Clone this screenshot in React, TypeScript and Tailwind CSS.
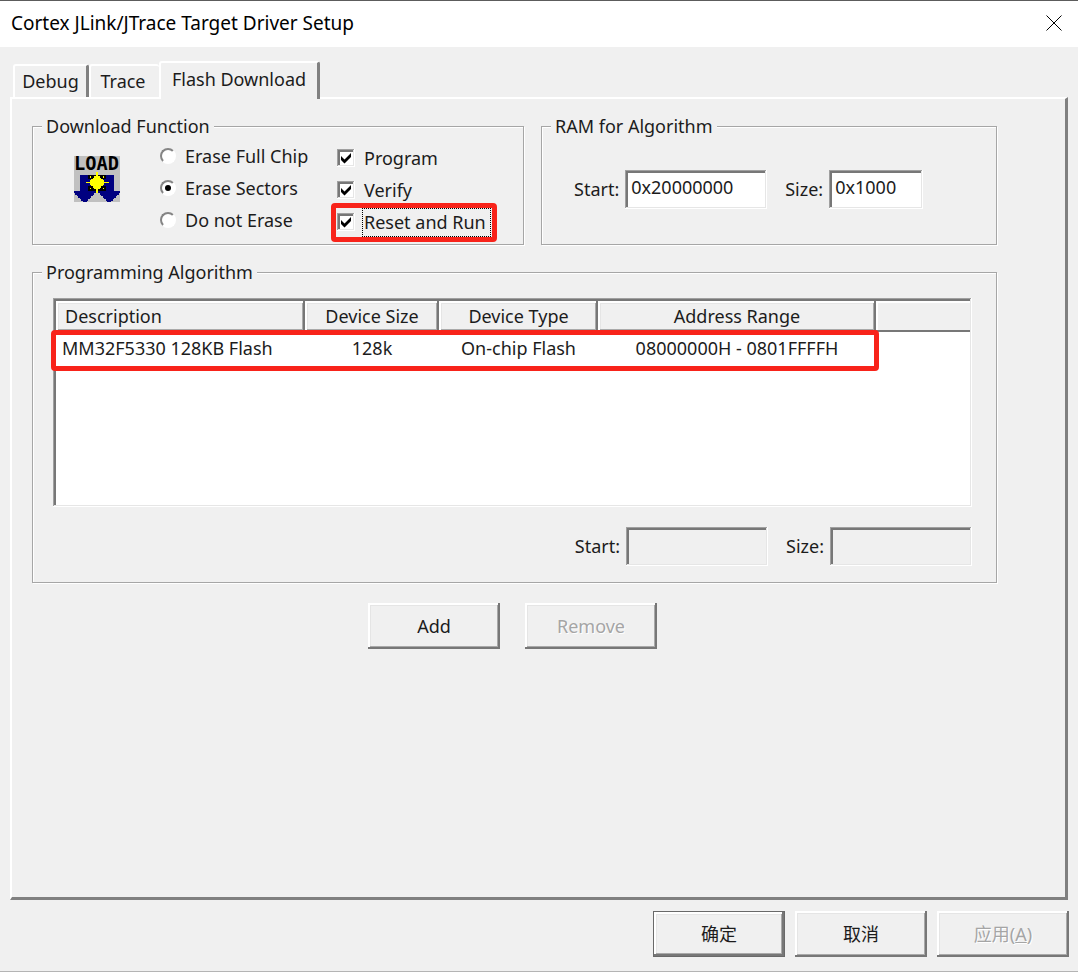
import { useState, type InputHTMLAttributes, type ReactNode } from "react";

const raised =
  "shadow-[inset_-2px_-2px_#777777,inset_2px_2px_#ffffff,inset_-3px_-3px_#a9a9a9,inset_3px_3px_#e5e5e5]";
const sunken =
  "shadow-[inset_-1px_-1px_#ffffff,inset_1px_1px_#a0a0a0,inset_-2px_-2px_#e6e6e6,inset_3px_3px_#777777]";

const tabs = [
  { name: "Debug", className: "h-[33px] w-[76px] border-r-[3px] border-r-[#808080]" },
  { name: "Trace", className: "h-[33px] w-[70px] border-r-0 pr-1" },
  {
    name: "Flash Download",
    className: "relative -mb-[2px] h-[38px] w-[161px] border-r-[3px] border-r-[#808080] pb-1",
  },
];

const eraseModes = ["Erase Full Chip", "Erase Sectors", "Do not Erase"];

const columns = [
  { name: "Description", width: "w-[249px]", align: "pl-[9px] text-left" },
  { name: "Device Size", width: "w-[134px]", align: "text-center" },
  { name: "Device Type", width: "w-[159px]", align: "text-center" },
  { name: "Address Range", width: "w-[278px]", align: "text-center" },
];

function LoadIcon() {
  return (
    <svg
      viewBox="0 0 32 32"
      className="size-[46px] overflow-visible"
      shapeRendering="crispEdges"
      aria-hidden="true"
    >
      <rect width="32" height="32" fill="#c0c0c0" />
      <path
        fill="#000080"
        d="M4 13h8v3h3v8h1v2h-2v1h-1v1h-1v1h-1v1h-1v1h-1v1h-3v-1h-1v-1h-1v-1h-1v-1h-1v-1h-1v-1h-1v-2h4z"
      />
      <path
        fill="#000080"
        d="M28 13h-8v3h-3v8h-1v2h2v1h1v1h1v1h1v1h1v1h1v1h3v-1h1v-1h1v-1h1v-1h1v-1h1v-1h1v-2h-4z"
      />
      <path
        fill="#000000"
        d="M10 13h3v3h-3zM13 13h2v2h-2zM17 13h2v2h-2zM19 13h3v3h-3zM10 21h3v3h-3zM13 22h2v2h-2zM17 22h2v2h-2zM19 21h3v3h-3z"
      />
      <path
        fill="#ffff00"
        d="M15 11h2v3h1v1h1v1h1v1h1v1h3v1h-3v1h-1v1h-1v1h-1v1h-1v3h-2v-3h-1v-1h-1v-1h-1v-1h-1v-1h-3v-1h3v-1h1v-1h1v-1h1v-1h1zM11 14h1v1h-1zM20 14h1v1h-1zM11 22h1v1h-1zM20 22h1v1h-1z"
      />
      <text
        x="0"
        y="10"
        fontSize="13"
        fontWeight="bold"
        fontFamily="DejaVu Sans Mono, monospace"
        fill="#000000"
      >
        LOAD
      </text>
    </svg>
  );
}

function Group({
  title,
  className,
  children,
}: {
  title: string;
  className: string;
  children: ReactNode;
}) {
  return (
    <fieldset
      className={`min-w-0 border border-[#a6a6a6] shadow-[1px_1px_#ffffff,inset_1px_1px_#ffffff] ${className}`}
    >
      <legend className="ml-[9px] h-[26px] bg-[#f0f0f0] px-1 leading-[26px]">{title}</legend>
      {children}
    </fieldset>
  );
}

function CheckBox({ label, focused }: { label: string; focused?: boolean }) {
  const [checked, setChecked] = useState(true);
  return (
    <label className="flex h-8 items-center gap-[8px]">
      <span className="grid">
        <input
          type="checkbox"
          checked={checked}
          onChange={() => setChecked(!checked)}
          className={`col-start-1 row-start-1 size-[18px] appearance-none bg-white ${sunken}`}
        />
        {checked && (
          <svg
            viewBox="0 0 18 18"
            className="pointer-events-none col-start-1 row-start-1 size-[18px]"
            aria-hidden="true"
          >
            <path d="M4 7l3.500 3.500L14 4v4l-6.500 6.500L4 11z" fill="#000000" />
          </svg>
        )}
      </span>
      <span
        className={
          focused ? "pr-1 pl-px leading-[27px] outline-1 outline-dotted outline-black" : "px-px"
        }
      >
        {label}
      </span>
    </label>
  );
}

function Field({
  id,
  label,
  className,
  ...rest
}: { id: string; label: string } & InputHTMLAttributes<HTMLInputElement>) {
  return (
    <div className="flex items-center gap-[6px]">
      <label htmlFor={id}>{label}</label>
      <input
        id={id}
        type="text"
        className={`h-[39px] bg-white pb-[5px] pl-[6px] outline-none disabled:bg-[#f0f0f0] ${sunken} ${className}`}
        {...rest}
      />
    </div>
  );
}

export default function App() {
  const [erase, setErase] = useState("Erase Sectors");

  return (
    <div className="flex min-h-screen flex-col border-t border-b border-t-[#5c5c5c] border-b-[#b4b4b4] bg-[#f0f0f0] font-['Noto_Sans','Noto_Sans_CJK_SC',sans-serif] text-[18px] text-[#1c1c1c]">
      <header className="flex h-[46px] items-center justify-between bg-white pr-4 pb-[2px] pl-[11px] text-black">
        <h1 className="text-[19px]">Cortex JLink/JTrace Target Driver Setup</h1>
        <button type="button" aria-label="Close">
          <svg viewBox="0 0 16 16" className="size-4" aria-hidden="true">
            <path d="M.5.5l15 15M15.500.5l-15 15" stroke="#000000" strokeWidth="1" />
          </svg>
        </button>
      </header>

      <div role="tablist" className="flex h-[50px] items-end pl-[13px]">
        {tabs.map((tab) => (
          <button
            key={tab.name}
            type="button"
            role="tab"
            aria-selected={tab.name === "Flash Download"}
            className={`rounded-t-[3px] border-t-2 border-l-2 border-t-white border-l-white bg-[#f0f0f0] whitespace-nowrap ${tab.className}`}
          >
            {tab.name}
          </button>
        ))}
      </div>

      <main className="mr-[10px] ml-[10px] flex-1 border-t-2 border-r-[3px] border-b-[3px] border-l-2 border-t-white border-r-[#808080] border-b-[#808080] border-l-white pt-[14px] pr-[68px] pl-[20px]">
        <div className="flex gap-[17px]">
          <Group title="Download Function" className="h-[132px] w-[492px]">
            <div className="flex">
              <div className="w-[127px] pt-[17px] pl-[41px]">
                <LoadIcon />
              </div>
              <div className="w-[177px] pt-px">
                {eraseModes.map((mode) => (
                  <label key={mode} className="flex h-8 items-center gap-[9px]">
                    <input
                      type="radio"
                      name="erase"
                      checked={erase === mode}
                      onChange={() => setErase(mode)}
                      className="grid size-4 shrink-0 appearance-none place-items-center rounded-full border-2 border-t-[#858585] border-r-white border-b-white border-l-[#858585] bg-white checked:before:size-[6px] checked:before:rounded-full checked:before:bg-black"
                    />
                    {mode}
                  </label>
                ))}
              </div>
              <div className="pt-[3px]">
                <CheckBox label="Program" />
                <CheckBox label="Verify" />
                <div className="relative">
                  <CheckBox label="Reset and Run" focused />
                  <div className="pointer-events-none absolute -top-[3px] -right-[7px] -bottom-[4px] -left-[6px] rounded-[4px] border-[5px] border-[#f8231a]" />
                </div>
              </div>
            </div>
          </Group>

          <Group title="RAM for Algorithm" className="h-[132px] flex-1">
            <div className="flex gap-[18px] pt-[31px] pl-[32px]">
              <Field id="ram-start" label="Start:" defaultValue="0x20000000" className="w-[142px]" />
              <Field id="ram-size" label="Size:" defaultValue="0x1000" className="w-[94px]" />
            </div>
          </Group>
        </div>

        <Group title="Programming Algorithm" className="mt-[14px] h-[324px]">
          <div className="relative mt-[13px] mr-[24px] ml-[20px]">
            <div className={`h-[209px] bg-white pt-[3px] pr-[2px] pl-[3px] ${sunken}`}>
              <table className="w-full table-fixed border-collapse">
                <thead>
                  <tr className="h-[31px] bg-[#f0f0f0]">
                    {columns.map((column) => (
                      <th
                        key={column.name}
                        className={`p-0 font-normal ${raised} ${column.width} ${column.align}`}
                      >
                        {column.name}
                      </th>
                    ))}
                    <td className="shadow-[inset_0_-2px_#777777,inset_2px_2px_#ffffff]" />
                  </tr>
                </thead>
                <tbody>
                  <tr className="h-[32px] text-center">
                    <td className="pl-[6px] text-left whitespace-nowrap">MM32F5330 128KB Flash</td>
                    <td>128k</td>
                    <td>On-chip Flash</td>
                    <td>08000000H - 0801FFFFH</td>
                    <td />
                  </tr>
                </tbody>
              </table>
            </div>
            <div className="pointer-events-none absolute top-[32px] -left-[2px] h-[41px] w-[828px] rounded-[4px] border-[5px] border-[#f8231a]" />
          </div>
          <div className="mt-[20px] mr-[24px] flex justify-end gap-[18px]">
            <Field id="flash-start" label="Start:" disabled className="w-[142px]" />
            <Field id="flash-size" label="Size:" disabled className="w-[142px]" />
          </div>
        </Group>

        <div className="mt-[20px] flex gap-[25px] pl-[336px]">
          <button type="button" className={`h-[46px] w-[132px] ${raised}`}>
            Add
          </button>
          <button
            type="button"
            disabled
            className={`h-[46px] w-[132px] text-[#a5a5a5] [text-shadow:1px_1px_#ffffff] ${raised}`}
          >
            Remove
          </button>
        </div>
      </main>

      <footer className="flex justify-end gap-[10px] pt-[11px] pr-[9px] pb-[14px]">
        <button type="button" className={`h-[46px] w-[132px] border border-[#696969] ${raised}`}>
          确定
        </button>
        <button type="button" className={`h-[46px] w-[132px] ${raised}`}>
          取消
        </button>
        <button
          type="button"
          disabled
          className={`h-[46px] w-[132px] text-[#a5a5a5] [text-shadow:1px_1px_#ffffff] ${raised}`}
        >
          应用(<u>A</u>)
        </button>
      </footer>
    </div>
  );
}
